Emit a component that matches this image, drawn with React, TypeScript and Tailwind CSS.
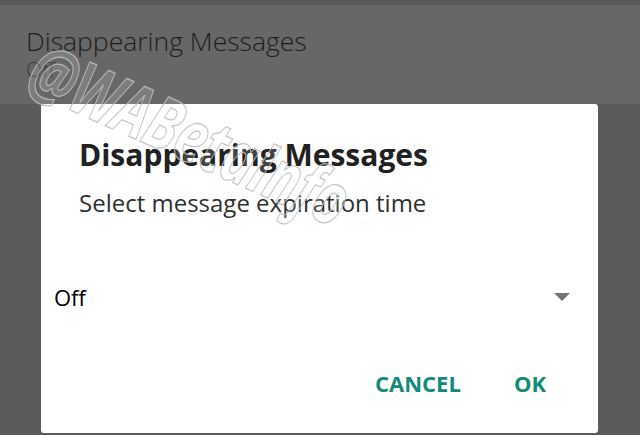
import React from "react";

const App: React.FC = () => {
  return (
    <div className="relative w-[640px] h-[435px] overflow-hidden bg-[#5b5b5b] font-['Open_Sans',sans-serif]">
      <div className="h-[5px] bg-[#5a5a5a]" />
      <div className="h-[99px] bg-[#676767] pl-[26px] pt-[20px]">
        <div className="text-[26.5px] leading-[32px] font-light text-[#1e1e1e]">
          Disappearing Messages
        </div>
        <div className="text-[21px] leading-[24px] font-light text-[#3c3c3c]">Off</div>
      </div>

      <div className="ml-[41px] w-[557px] h-[329px] bg-white rounded-[3px] flex flex-col">
        <div className="pl-[38px] pt-[32px] text-[30px] leading-[38px] font-bold text-[#212121]">
          Disappearing Messages
        </div>
        <div className="pl-[38px] pt-[14px] text-[24px] leading-[30px] text-[#303030]">
          Select message expiration time
        </div>
        <div className="flex items-center justify-between pl-[13px] pr-[28px] mt-[64px]">
          <span className="text-[22px] leading-[30px] text-black">Off</span>
          <svg width="16" height="8" viewBox="0 0 16 8">
            <path d="M0 0 L16 0 L8 8 Z" fill="#757575" />
          </svg>
        </div>
        <div className="flex justify-end gap-[53px] pr-[52px] mt-[58px] text-[22px] leading-[26px] font-bold text-[#138b7c]">
          <span>CANCEL</span>
          <span>OK</span>
        </div>
      </div>

      {/* watermark */}
      <div className="pointer-events-none absolute z-10 left-[34px] top-[26px] rotate-[24deg] scale-y-[1.35] origin-left text-[54px] leading-[74px] font-bold italic tracking-[-0.5px] text-[rgba(255,255,255,0.15)] [-webkit-text-stroke:1px_rgba(190,190,190,0.85)]">
        @WABetaInfo
      </div>
    </div>
  );
};

export default App;
